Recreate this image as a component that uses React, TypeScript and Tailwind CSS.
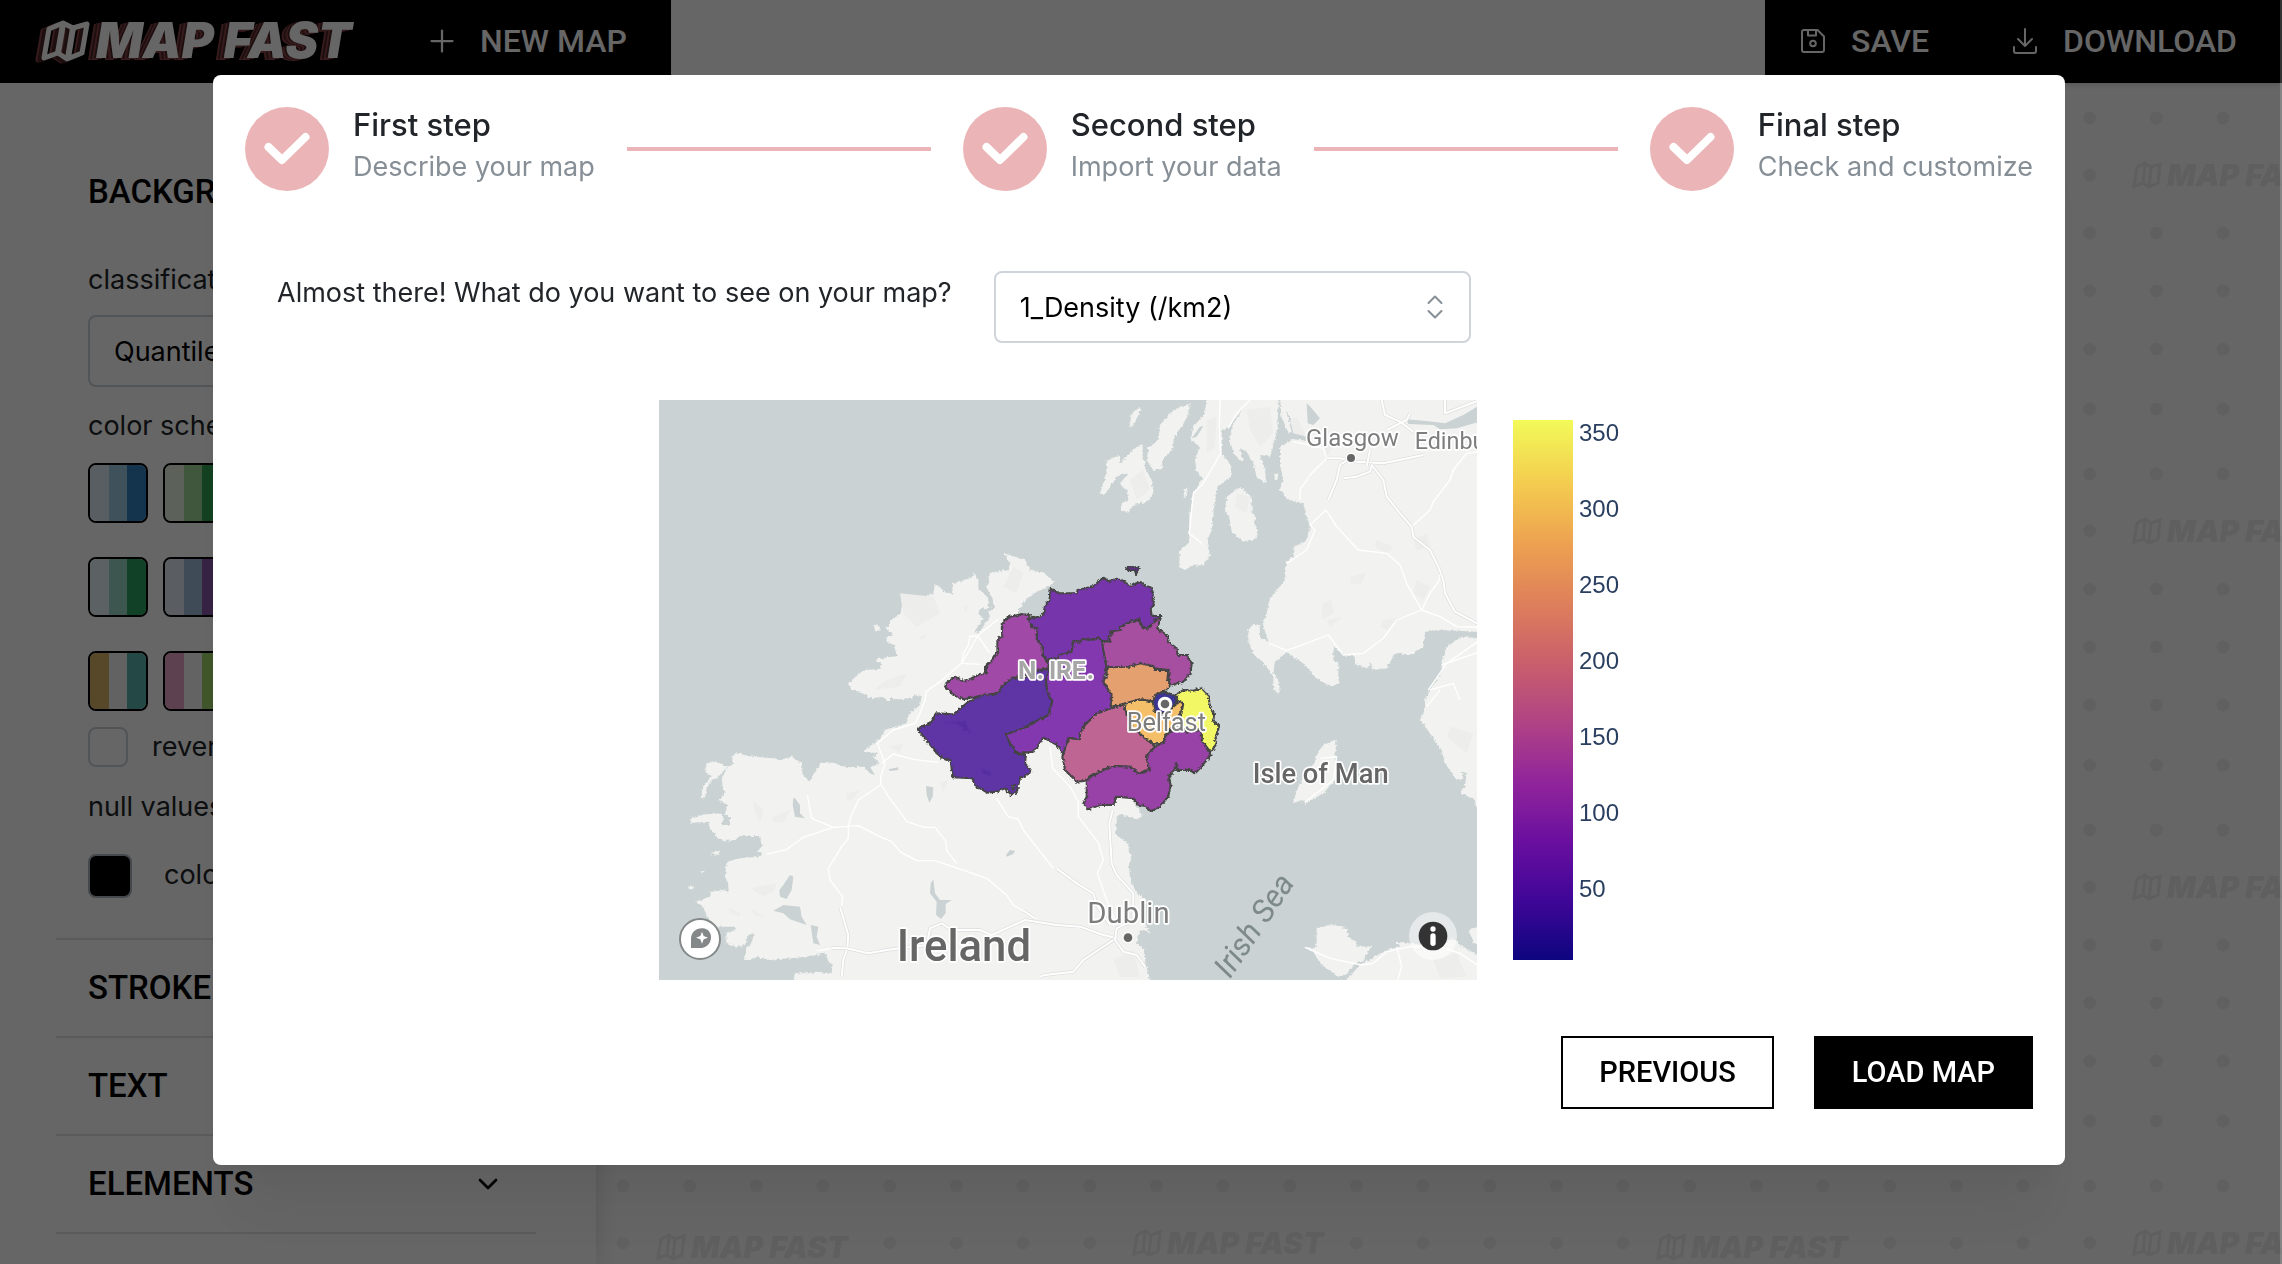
import React, { useState } from 'react';
import { ChevronDown, Plus } from 'lucide-react';

const steps = [
  { title: 'First step', description: 'Describe your map' },
  { title: 'Second step', description: 'Import your data' },
  { title: 'Final step', description: 'Check and customize' },
];

const schemes = [
  ['#deebf7', '#9ecae1', '#3182bd'],
  ['#e5f5e0', '#a1d99b', '#31a354'],
  ['#fee6ce', '#fdae6b', '#e6550d'],
  ['#efedf5', '#bcbddc', '#756bb1'],
  ['#fee0d2', '#fc9272', '#de2d26'],
  ['#e5f5f9', '#99d8c9', '#2ca25f'],
  ['#e0ecf4', '#9ebcda', '#8856a7'],
  ['#e0f3db', '#a8ddb5', '#43a2ca'],
  ['#fee8c8', '#fdbb84', '#e34a33'],
  ['#ece7f2', '#a6bddb', '#2b8cbe'],
  ['#d8b365', '#f5f5f5', '#5ab4ac'],
  ['#e9a3c9', '#f7f7f7', '#a1d76a'],
  ['#af8dc3', '#f7f7f7', '#7fbf7b'],
  ['#ef8a62', '#f7f7f7', '#67a9cf'],
  ['#fc8d59', '#ffffbf', '#91bfdb'],
];

const land = [
  // Ireland
  '1092,520 1155,540 1170,568 1215,582 1242,605 1235,615 1190,635 1150,665 1135,695 1165,720 1240,760 1500,800 1560,1100 1480,1265 1510,1308 1490,1318 1440,1303 1430,1310 1428,1365 1465,1390 1467,1420 1475,1425 1467,1450 1470,1500 1490,1540 1522,1560 1500,1590 1520,1645 1535,1660 1500,1650 1490,1690 1515,1710 1515,1745 1533,1810 460,1810 465,1780 510,1780 530,1775 575,1780 578,1752 565,1750 560,1720 500,1730 390,1740 345,1730 335,1740 312,1740 320,1700 330,1697 345,1660 325,1665 315,1695 290,1700 260,1690 258,1660 290,1645 285,1640 230,1640 200,1610 190,1580 165,1565 210,1550 215,1535 250,1530 265,1535 265,1510 255,1490 260,1445 300,1435 360,1430 368,1420 350,1415 365,1400 360,1368 300,1368 285,1380 250,1383 230,1370 208,1340 205,1325 155,1328 150,1315 180,1305 240,1300 250,1315 245,1335 270,1335 270,1315 255,1300 265,1275 235,1262 245,1250 255,1245 245,1200 262,1160 280,1155 275,1130 290,1117 320,1128 430,1138 455,1130 485,1150 490,1185 508,1205 530,1170 540,1147 580,1148 615,1162 670,1160 700,1187 690,1162 718,1150 700,1130 715,1120 670,1115 720,1075 735,1050 800,1030 805,1005 840,975 845,948 820,945 815,958 800,950 790,960 755,955 745,962 730,950 690,955 660,935 635,930 625,910 670,870 715,868 725,855 705,838 770,828 762,795 740,785 740,772 760,765 738,745 755,720 782,700 790,650 835,660 880,640 885,612 905,625 910,635 940,642 935,612 990,595 1005,580 1015,600 1015,625 1045,655 1045,685 1020,685 1015,700 1030,715 1003,755 1015,760 1050,710 1045,695 1065,680 1055,650 1040,625 1050,578 1105,570 1110,550',
  '183,1255 190,1220 215,1188 195,1175 200,1150 230,1145 262,1160 235,1190 215,1200 200,1225 195,1255',
  '702,735 720,740 718,752 705,750',
  '210,1423 225,1413 240,1415 238,1424',
  '180,1475 194,1472 190,1480',
  '145,1518 162,1520 158,1528 147,1527',
  // Hebrides and Kintyre
  '1440,225 1400,240 1400,280 1380,340 1395,343 1435,285 1465,280 1440,310 1460,330 1465,360 1445,370 1445,390 1465,398 1480,375 1520,365 1540,345 1535,300 1515,265 1515,240 1508,240 1508,195 1485,205 1440,250',
  '1650,68 1600,90 1560,135 1555,180 1525,205 1520,240 1540,270 1565,268 1570,235 1600,205 1600,180 1645,105',
  '1500,80 1475,100 1468,145 1485,125 1500,95',
  '1700,50 1695,100 1660,140 1652,180 1680,200 1665,240 1670,275 1690,295 1660,340 1648,400 1647,490 1620,510 1617,560 1635,570 1655,558 1690,555 1710,525 1700,485 1715,450 1720,400 1730,325 1775,285 1770,250 1745,220 1745,150 1765,145 1800,95 1850,50',
  '1830,50 1775,140 1770,180 1780,220 1810,248 1800,205 1820,215 1840,250 1850,290 1878,310 1875,265 1860,225 1890,230 1912,150 1916,50',
  '1800,320 1760,350 1755,390 1768,410 1775,455 1810,485 1850,475 1852,445 1840,430 1850,410 1835,400 1835,350',
  '1630,350 1632,330 1642,320 1640,350',
  '1903,300 1905,283 1914,280 1912,300',
  // Scotland
  '1920,50 1924,110 1945,158 1955,155 1938,90 1960,130 1990,155 2000,182 1960,178 1920,200 1920,260 1930,290 1920,330 1945,360 1990,370 2000,410 2010,440 2000,480 1965,500 1960,530 1938,550 1935,600 1890,655 1880,700 1868,730 1885,785 1862,775 1858,735 1840,732 1825,750 1825,785 1840,820 1880,860 1900,890 1900,930 1920,943 1915,900 1900,880 1905,845 1940,817 1990,850 2030,895 2075,920 2095,910 2095,850 2080,840 2080,800 2120,830 2140,825 2150,855 2185,865 2190,845 2200,870 2240,865 2265,820 2310,825 2350,800 2355,755 2400,750 2520,755 2520,50',
  // Cumbria
  '2520,775 2465,770 2420,800 2405,840 2405,880 2370,930 2355,960 2355,990 2340,1020 2370,1060 2405,1110 2415,1150 2450,1200 2470,1195 2465,1175 2480,1180 2475,1215 2460,1240 2500,1255 2520,1305',
  // Isle of Man
  '2090,1078 2050,1095 2035,1115 2020,1155 1975,1220 1958,1270 1990,1260 1995,1272 2050,1240 2085,1200 2090,1165 2085,1130',
  // Anglesey and Wales
  '2030,1645 2075,1633 2120,1645 2125,1670 2150,1685 2145,1700 2195,1698 2175,1730 2170,1745 2145,1750 2115,1787 2090,1788 2040,1750 2020,1715 1990,1700 2030,1705',
  '2110,1810 2160,1755 2240,1710 2280,1700 2265,1685 2310,1690 2380,1700 2440,1675 2460,1695 2520,1730 2520,1810',
  '2485,1650 2520,1638 2520,1700 2500,1685',
];

const water = [
  '460,1255 465,1255 480,1275 480,1300 495,1315 465,1310 458,1275',
  '450,1485 460,1490 455,1530 440,1557 420,1550 418,1530 430,1515',
  '400,1592 430,1575 480,1580 485,1610 500,1635 450,1618 430,1600',
  '512,1635 535,1640 530,1670 540,1695 520,1690',
  '858,1218 880,1222 878,1250 868,1268 860,1245',
  '745,1168 775,1162 775,1170 750,1173',
  '670,1155 690,1160 705,1186 690,1180',
  '1098,1425 1110,1410 1125,1412 1120,1422 1100,1430',
  '880,1498 885,1540 900,1560 935,1560 917,1572 917,1600 903,1617 888,1605 890,1565 870,1540 872,1510',
  '2300,118 2380,125 2415,130 2470,105 2520,75 2520,125 2450,145 2400,148 2380,135 2305,132',
  '2000,70 2015,85 2040,115 2020,135 2003,130',
  '1655,175 1680,140 1690,138 1670,170',
];

const relief = [
  '780,640 880,650 900,700 830,740 790,700',
  '835,775 860,758 850,778',
  '970,680 985,672 978,700',
  '740,900 800,880 780,920 700,930',
  '1120,560 1150,580 1130,640 1090,620',
  '340,1260 370,1290 360,1330 345,1300',
  '400,1310 450,1290 430,1330 400,1325',
  '620,1240 660,1230 640,1255 620,1265',
  '330,1525 410,1510 400,1535 370,1550',
  '265,1580 300,1600 300,1610 270,1600',
  '335,1585 375,1615 340,1605',
  '750,1100 790,1090 780,1120',
  '900,1210 925,1200 910,1235',
  '1820,90 1890,80 1900,160 1860,200 1830,150',
  '1700,120 1730,110 1725,200 1700,220',
  '1790,340 1830,350 1820,400 1785,380',
  '1470,300 1510,270 1530,330 1490,360',
  '1970,110 2000,170 1960,160 1950,120',
  '2050,190 2080,200 2060,230',
  '2210,480 2260,500 2240,520 2205,500',
  '2320,480 2360,460 2370,500 2330,510',
  '2130,590 2180,580 2160,615 2135,610',
  '2045,670 2075,660 2080,700 2048,720',
  '2060,720 2110,710 2070,740',
  '2230,720 2290,710 2240,750 2220,740',
  '2330,600 2370,620 2350,660 2320,640',
  '2430,1040 2500,1060 2480,1120 2420,1070',
  '1450,1600 1480,1570 1490,1620 1460,1650',
  '1420,1740 1480,1710 1500,1790 1440,1790',
  '2380,1740 2450,1720 2480,1790 2400,1795',
];

const minorRoads = [
  '1075,718 1015,765 965,850 900,905 858,935 855,960 840,1000 825,1030 760,1050 712,1090 735,1150 722,1190 722,1215 655,1260 632,1310 625,1340 625,1375 605,1400 565,1465 570,1500 608,1550 605,1580',
  '990,768 1015,770 1050,820',
  '990,768 985,795 970,820 965,850 1020,853',
  '725,1150 760,1122 820,1138 895,1147',
  '725,1215 745,1250 790,1310 800,1325 855,1342 885,1342 918,1385 920,1412 950,1450',
  '380,1423 440,1408 490,1372 580,1342 655,1337 720,1370 755,1385 780,1415 830,1442 885,1442 945,1462 1040,1495 1100,1545 1120,1575 1190,1615',
  '502,1245 515,1315 580,1342',
  '1070,1255 1105,1310 1135,1318 1150,1350 1240,1465',
  '530,1712 580,1705',
  '1230,1100 1238,1165 1290,1220 1315,1265 1315,1310 1375,1388 1390,1440 1372,1480 1400,1560 1425,1620',
  '2058,390 2090,440 2155,510 2240,520 2280,555 2300,610 2345,690 2270,720 2230,775 2170,820 2110,825 2065,765 1940,812 1888,790',
  '2058,390 2010,435 2025,450 2000,510 1940,550',
  '2345,690 2400,710 2450,740 2520,742',
  '2345,690 2370,640 2398,600 2400,565',
  '2315,440 2370,390 2380,365 2430,300 2440,270 2480,220 2520,215',
  '2060,235 2010,285 1980,330 1980,360',
  '1740,60 1738,140 1742,220 1690,310 1660,340 1648,460 1685,490',
  '1765,145 1790,100 1830,60',
  '1960,185 2050,205 2060,235',
  '2405,855 2520,815 M2365,930 2420,850 2520,780',
  '2370,930 2440,910 2460,960 M2360,980 2400,930',
  '1995,1702 2070,1735 2165,1755 2200,1750 2240,1715 2310,1700 2400,1700 2460,1720 2520,1760',
  '2270,1700 2285,1760 2270,1810',
  '2040,1135 2090,1130 2080,1200 2000,1262',
];

const mainRoads = [
  '600,1580 625,1665 622,1705 610,1740 605,1790',
  '575,1704 620,1705 685,1720 740,1710 860,1695 870,1645 905,1630 935,1650 1020,1650 1055,1665 1155,1620 1250,1635 1320,1640 1390,1665 1420,1672',
  '1250,1465 1310,1510 1360,1540 1370,1575 1410,1635',
  '1418,1290 1408,1330 1415,1450 1430,1485 1480,1540 1480,1620 1430,1645 1425,1680 1450,1715 1490,1725 1515,1760',
  '1150,1592 1185,1615',
  '1200,1790 1215,1785 1300,1775 1330,1740 1420,1680',
  '2060,235 2100,235 2150,245 2230,250 2350,225',
  '2065,360 2090,300 2100,255 2130,235',
  '2110,295 2150,290 2190,275 2195,255 2230,300 2240,350 2280,400 2315,440 2320,470 2370,510 2395,560 2410,600 2415,640 2445,695 2520,735',
  '2225,60 2235,105 2280,125 2320,155 M2240,150 2300,120 2310,100',
  '2415,60 2415,100 2520,60',
  '2180,260 2190,210',
];

// Outlines share the frame of the coast lines above, shifted by (780, 480)
const districts = [
  { name: 'Causeway Coast and Glens', fill: '#7634ab', points: '452,147 478,160 530,160 532,150 560,145 585,135 598,122 612,113 625,124 650,116 672,124 690,138 722,126 735,138 752,142 762,165 757,180 762,195 752,205 755,228 784,228 760,248 740,267 728,262 718,238 690,246 660,262 660,270 630,275 638,285 626,290 632,305 605,303 595,293 572,300 550,298 540,305 520,303 515,335 480,345 470,355 440,362 428,345 428,320 410,300 412,265 395,262 385,237 415,230 430,225 434,200 448,182' },
  { name: 'Derry City and Strabane', fill: '#a04aa6', points: '385,237 390,225 365,222 350,226 340,228 325,232 310,245 305,262 307,290 292,298 292,335 275,362 258,378 258,400 240,402 205,420 185,422 165,410 138,430 135,440 150,455 160,465 190,478 240,468 290,460 330,420 350,412 400,395 450,385 470,358 440,362 428,345 428,320 410,300 412,265 395,262' },
  { name: 'Fermanagh and Omagh', fill: '#5e34a6', points: '52,567 75,555 95,545 108,520 160,523 205,485 250,465 290,462 318,428 340,412 365,420 400,395 445,385 450,400 438,420 442,455 457,485 445,525 420,540 400,548 370,565 318,583 330,610 350,640 378,645 375,670 392,690 388,700 360,715 355,735 350,755 335,765 315,745 290,755 262,758 240,745 225,735 215,715 158,712 152,662 128,655 110,640 95,620' },
  { name: 'Mid Ulster', fill: '#8337af', points: '440,362 470,355 480,345 515,335 520,303 540,305 550,298 572,300 595,293 605,303 620,375 610,425 635,465 632,505 590,520 555,555 540,598 505,595 490,643 470,615 430,592 410,625 395,635 355,643 330,610 318,583 370,565 400,548 445,525 457,485 442,455 438,420 450,385' },
  { name: 'Mid and East Antrim', fill: '#a64fa1', points: '605,303 632,305 626,290 638,285 630,275 660,270 660,262 690,246 718,238 728,262 740,267 784,228 772,265 800,285 808,308 830,325 832,345 860,345 875,370 872,400 850,425 830,430 810,438 805,390 760,385 720,370 690,380 620,382' },
  { name: 'Antrim and Newtownabbey', fill: '#e5a06f', points: '620,382 690,380 720,370 760,378 765,390 805,390 802,420 810,438 790,455 765,465 760,485 720,478 680,490 632,500 635,465 610,425 620,410' },
  { name: 'Armagh, Banbridge and Craigavon', fill: '#bf6594', points: '505,595 540,598 540,580 555,555 590,520 665,495 680,490 690,550 720,580 765,620 738,650 750,690 730,692 718,702 690,680 640,678 610,690 570,708 555,722 530,725 495,690 487,650' },
  { name: 'Lisburn and Castlereagh', fill: '#f4bf68', points: '670,492 720,478 760,485 765,515 790,530 820,500 845,480 850,500 830,540 800,580 790,608 765,612 740,600 720,580 690,555' },
  { name: 'Ards and North Down', fill: '#f2f765', points: '820,470 850,450 880,452 905,445 925,465 930,500 942,525 940,545 958,555 945,600 950,610 932,637 912,610 905,600 905,570 860,575 840,545 850,490' },
  { name: 'Newry, Mourne and Down', fill: '#9842a7', points: '765,620 790,608 800,580 840,560 860,575 905,570 905,600 932,645 900,685 885,700 870,690 830,690 830,670 820,695 805,708 812,735 805,770 780,800 750,815 735,798 715,795 700,775 650,770 640,795 600,795 565,808 550,790 560,770 560,720 610,690 640,678 690,680 718,702 750,690 738,650' },
  { name: 'Belfast', fill: '#3e3596', points: '780,458 795,455 830,470 828,490 820,500 795,520 765,515 758,485 768,465' },
  { name: 'Rathlin Island', fill: '#5e2f8f', points: '678,85 692,78 716,83 709,105 705,92 678,90' },
];

const ticks = [350, 300, 250, 200, 150, 100, 50];

const MapGlyph: React.FC<{ className?: string }> = ({ className }) => (
  <svg viewBox="0 0 50 42" className={className} fill="none" stroke="currentColor" strokeWidth="5" strokeLinejoin="round" aria-hidden="true">
    <path d="M9 9 L23 3 L33 8 L47 4 L42 33 L27 39 L18 33 L4 38 Z" />
    <path d="M23 4 L18 33 M33 8 L28 38" strokeWidth="6" />
  </svg>
);

const Logo = () => (
  <div className="flex w-[320px] items-center gap-1.5 text-white">
    <span className="relative ml-1 h-[42px] w-[50px] shrink-0">
      <MapGlyph className="absolute -left-1.5 top-0.5 h-[42px] w-[50px] text-[#8a4547]" />
      <MapGlyph className="absolute -left-1 top-0.5 h-[42px] w-[50px] text-[#4a2526]" />
      <MapGlyph className="absolute left-0 top-0 h-[42px] w-[50px]" />
    </span>
    <span className="whitespace-nowrap font-['Inter',sans-serif] text-[49px] font-black italic leading-none [text-shadow:-2px_0_0_#4a2526,-4px_1px_0_#8a4547,-6px_1px_0_#4a2526,-8px_2px_0_#8a4547]">
      MAP FAST
    </span>
  </div>
);

const SaveIcon = () => (
  <svg viewBox="0 0 24 24" className="size-6" fill="none" stroke="currentColor" strokeWidth="2" strokeLinejoin="round" aria-hidden="true">
    <path d="M3 1 H16.500 L23 7.500 V21 Q23 23 21 23 H3 Q1 23 1 21 V3 Q1 1 3 1 Z" />
    <path d="M7 1 V6.500 H15 V1" />
    <circle cx="12" cy="14.500" r="2.800" />
  </svg>
);

const DownloadIcon = () => (
  <svg viewBox="0 0 24 26" className="h-[26px] w-6" fill="none" stroke="currentColor" strokeWidth="2" strokeLinecap="round" strokeLinejoin="round" aria-hidden="true">
    <path d="M12 1 V17 M5 11 L12 18 L19 11" />
    <path d="M1 19 V23 Q1 25 3 25 H21 Q23 25 23 23 V19" />
  </svg>
);

const Header = () => (
  <header className="relative z-10 flex h-[83px] shrink-0 justify-between bg-white font-['Roboto',sans-serif] text-[32px] font-medium text-white shadow-md">
    <div className="flex items-center bg-black pb-0.5 pl-9 pr-11">
      <Logo />
      <button className="ml-[68px] flex items-center gap-5">
        <Plus className="size-9" strokeWidth={1.5} />
        NEW MAP
      </button>
    </div>
    <div className="flex items-center gap-[84px] bg-black pb-0.5 pl-9 pr-[45px]">
      <button className="flex items-center gap-[26px]">
        <SaveIcon />
        SAVE
      </button>
      <button className="flex items-center gap-[26px]">
        <DownloadIcon />
        DOWNLOAD
      </button>
    </div>
  </header>
);

const Sidebar = () => {
  const [reverse, setReverse] = useState(false);

  return (
    <aside className="z-10 w-[596px] shrink-0 bg-white pl-14 pr-[60px] text-[27px] text-[#212529] shadow-[0_0_24px_rgba(0,0,0,0.15)]">
      <div className="border-b-2 border-[#dee2e6] px-8 pb-10">
        <h2 className="flex h-[172px] items-center pt-11 font-['Roboto',sans-serif] text-[33px] font-medium leading-none text-black">
          BACKGROUND
        </h2>
        <label htmlFor="classification" className="block h-[60px] leading-[50px]">classification</label>
        <select id="classification" className="h-[72px] w-full appearance-none rounded-lg border-2 border-[#ced4da] bg-white px-6 pt-0.5 text-black">
          <option>Quantile</option>
        </select>
        <p className="mt-4 h-[60px] leading-[46px]">color scheme</p>
        <div className="flex h-[248px] flex-wrap content-start gap-x-[15px] gap-y-[34px]">
          {schemes.map((colors) => (
            <button key={colors.join()} aria-label="color scheme" className="flex size-[60px] overflow-hidden rounded-lg border-2 border-black">
              {colors.map((color) => (
                <span key={color} className="h-full flex-1" style={{ backgroundColor: color }} />
              ))}
            </button>
          ))}
        </div>
        <label className="mt-4 flex items-center gap-6">
          <input
            type="checkbox"
            checked={reverse}
            onChange={() => setReverse(!reverse)}
            className="size-10 appearance-none rounded-lg border-2 border-[#ced4da] checked:bg-black"
          />
          reverse
        </label>
        <p className="mt-4 leading-[46px]">null values</p>
        <div className="mt-6 flex h-11 items-center gap-8">
          <button id="null-color" aria-label="null values color" className="size-11 rounded-lg border-2 border-[#adb5bd] bg-black" />
          <label htmlFor="null-color">color</label>
        </div>
      </div>
      {['STROKE', 'TEXT', 'ELEMENTS'].map((section) => (
        <button
          key={section}
          className="flex h-[98px] w-full items-center justify-between border-b-2 border-[#dee2e6] px-8 font-['Roboto',sans-serif] text-[33px] font-medium text-black"
        >
          {section}
          <ChevronDown className="size-8" strokeWidth={2} />
        </button>
      ))}
    </aside>
  );
};

const Watermark: React.FC<{ x: number; y: number }> = ({ x, y }) => (
  <g transform={`translate(${x} ${y})`}>
    <path d="M4 4 L12 0 L18 4 L27 1 L25 20 L16 24 L10 20 L1 23 Z M12 1 L10 20 M18 4 L16 23" fill="none" stroke="#ededed" strokeWidth="3" />
    <text x="34" y="23" fill="#ededed" className="font-['Inter',sans-serif] text-[30px] font-black italic">MAP FAST</text>
  </g>
);

const dotRows = [35, 92, 150, 208, 266, 326];
const dotColumns = Array.from({ length: 15 }, (_, i) => 27 + i * 66.67);

const Canvas = () => (
  <main className="min-w-0 flex-1">
    <svg className="size-full bg-white" aria-hidden="true">
      <defs>
        <pattern id="dots" width="1000" height="356" patternUnits="userSpaceOnUse">
          {dotRows.map((y) =>
            dotColumns
              .filter((x) => y !== 92 || !((x > 60 && x < 260) || (x > 530 && x < 740)))
              .map((x) => <circle key={`${x}-${y}`} cx={x} cy={y} r="6.500" fill="#f1f1f1" />)
          )}
          <Watermark x={61} y={84} />
          <Watermark x={537} y={80} />
        </pattern>
      </defs>
      <rect width="100%" height="100%" fill="url(#dots)" />
    </svg>
  </main>
);

const Stepper = () => (
  <ol className="flex items-center">
    {steps.map((step, i) => (
      <React.Fragment key={step.title}>
        {i > 0 && <li aria-hidden="true" className="mx-8 h-1 flex-1 bg-[#ebb4b6]" />}
        <li className="flex items-center gap-6">
          <span className="flex size-[84px] items-center justify-center rounded-full bg-[#ebb4b6]">
            <svg viewBox="0 0 46 34" className="h-[34px] w-[46px]" fill="none" stroke="#fff" strokeWidth="8" strokeLinecap="round" strokeLinejoin="round" aria-hidden="true">
              <path d="M4.500 15 L18 28 L41.500 5" />
            </svg>
          </span>
          <span className="flex flex-col whitespace-nowrap">
            <span className="text-[31px] font-medium leading-9 text-[#212529]">{step.title}</span>
            <span className="text-[27px] leading-[48px] text-[#868e96]">{step.description}</span>
          </span>
        </li>
      </React.Fragment>
    ))}
  </ol>
);

const MapView = () => (
  <svg viewBox="57 60 2454 1740" className="h-[580px] w-[818px] bg-[#cad2d3]" role="img" aria-label="Population density in Northern Ireland">
    <defs>
      <filter id="coast" x="0" y="0" width="1" height="1">
        <feTurbulence type="fractalNoise" baseFrequency="0.12" numOctaves="2" seed="4" />
        <feDisplacementMap in="SourceGraphic" scale="12" xChannelSelector="R" yChannelSelector="G" />
      </filter>
    </defs>
    <g fill="#f2f3f1" filter="url(#coast)">
      {land.map((points) => <polygon key={points} points={points} />)}
    </g>
    <g fill="#ededec">
      {relief.map((points) => <polygon key={points} points={points} />)}
    </g>
    <g fill="#cad2d3">
      {water.map((points) => <polygon key={points} points={points} />)}
    </g>
    <g fill="none" stroke="#fff" strokeWidth="4" strokeLinejoin="round">
      {minorRoads.map((points) => <path key={points} d={`M${points}`} />)}
    </g>
    <g fill="none" strokeLinejoin="round">
      {mainRoads.map((points) => (
        <React.Fragment key={points}>
          <path d={`M${points}`} stroke="#dcdddd" strokeWidth="10" />
          <path d={`M${points}`} stroke="#fff" strokeWidth="6" />
        </React.Fragment>
      ))}
    </g>
    <g transform="translate(780 480)" stroke="#444" strokeWidth="6" strokeLinejoin="round" filter="url(#coast)">
      {districts.map((d) => (
        <polygon key={d.name} points={d.points} fill={d.fill}>
          <title>{d.name}</title>
        </polygon>
      ))}
      <path d="M335,738 l10,-4 l-4,14 z" fill="#f2f3f1" />
      <path d="M125,548 l70,-5 l16,34 l-24,-10 l-14,-14 z M245,685 l30,16 l-6,8 l-22,-10 z" fill="#572fa0" stroke="none" />
    </g>
    <circle cx="1575" cy="972" r="22" fill="#fff" />
    <circle cx="1575" cy="972" r="13" fill="#666" />
    <circle cx="2133" cy="234" r="16" fill="#fff" />
    <circle cx="2133" cy="234" r="12" fill="#666" />
    <circle cx="1464" cy="1673" r="17" fill="#fff" />
    <circle cx="1464" cy="1673" r="13" fill="#666" />
    <g className="font-['Roboto',sans-serif]" fill="#7d7d7d" stroke="#fff" strokeWidth="10" strokeLinejoin="round" paintOrder="stroke">
      <text x="1134" y="897" fontSize="72" fontWeight="700" fill="#a6a6a6" className="font-['Inter',sans-serif]">N. IRE.</text>
      <text x="1460" y="1052" fontSize="76">Belfast</text>
      <text x="1998" y="197" fontSize="72">Glasgow</text>
      <text x="2324" y="206" fontSize="70">Edinburgh</text>
      <text x="1342" y="1630" fontSize="88">Dublin</text>
      <text x="1838" y="1210" fontSize="82" fontWeight="500" fill="#666">Isle of Man</text>
      <text x="770" y="1742" fontSize="131" fontWeight="500" fill="#666">Ireland</text>
    </g>
    <text x="1966" y="1508" transform="rotate(-56 1966 1508)" textAnchor="end" fontSize="94" fontStyle="italic" fill="#7d898b" className="font-['Roboto',sans-serif]">Irish Sea</text>
    <g transform="translate(180 1677)">
      <circle r="60" fill="#fff" stroke="#858888" strokeWidth="6" />
      <path d="M-27 27 V0 C-27 -20 -12 -33 8 -32 C24 -31 34 -18 33 -4 C32 14 18 27 0 27 Z" fill="#858888" />
      <path d="M6 -22 L11 -9 L24 -4 L11 1 L6 14 L1 1 L-12 -4 L1 -9 Z" fill="#fff" />
    </g>
    <g transform="translate(2379 1668)">
      <circle r="72" fill="#fff" fillOpacity="0.500" />
      <circle r="43" fill="#333" />
      <circle cy="-21" r="8" fill="#fff" />
      <rect x="-8" y="-8" width="16" height="38" rx="8" fill="#fff" />
    </g>
  </svg>
);

const ColorBar = () => (
  <div className="flex gap-1.5">
    <div className="h-[540px] w-[60px] bg-[linear-gradient(to_top,#0d057f,#3f0697_11%,#6a0f9f_22%,#91259b_33%,#b04384_44%,#c95f6c_55%,#de7f5b_66%,#eda150_77%,#f4cb4f_88%,#f2fa58)]" />
    <ul className="flex flex-col font-['Liberation_Sans',Arial,sans-serif] text-2xl text-[#2a3f5f]">
      {ticks.map((tick) => (
        <li key={tick} className="h-[76px] leading-[26px]">{tick}</li>
      ))}
    </ul>
  </div>
);

const ImportModal = () => {
  const [column, setColumn] = useState('1_Density (/km2)');

  return (
    <div className="fixed inset-0 z-20 flex items-start justify-center border-r-2 border-white/20 bg-black/60 pr-0.5 pt-[75px]">
      <section
        role="dialog"
        aria-label="Import data"
        className="mx-[213px] flex-1 rounded-lg bg-white px-8 pb-14 pt-8 shadow-[0_2px_6px_rgba(0,0,0,0.05),0_72px_56px_-14px_rgba(0,0,0,0.05),0_34px_24px_-14px_rgba(0,0,0,0.04)]"
      >
        <Stepper />
        <div className="mt-20 flex items-start gap-[42px] px-8 text-[27px] text-[#212529]">
          <label htmlFor="column" className="leading-[43px]">Almost there! What do you want to see on your map?</label>
          <div className="relative w-[477px]">
            <select
              id="column"
              value={column}
              onChange={(e) => setColumn(e.target.value)}
              className="h-[72px] w-full appearance-none rounded-lg border-2 border-[#ced4da] bg-white px-6 pt-0.5 text-black"
            >
              <option>1_Density (/km2)</option>
            </select>
            <svg viewBox="0 0 16 24" className="pointer-events-none absolute right-7 top-6 h-6 w-4" fill="none" stroke="#868e96" strokeWidth="2" strokeLinecap="round" strokeLinejoin="round" aria-hidden="true">
              <path d="M1.500 8 L8 1.500 L14.500 8 M1.500 16 L8 22.500 L14.500 16" />
            </svg>
          </div>
        </div>
        <div className="mt-[57px] flex justify-center gap-9">
          <MapView />
          <div className="mt-5">
            <ColorBar />
          </div>
        </div>
        <div className="mt-14 flex justify-end gap-10 font-['Roboto',sans-serif] text-[29px] font-medium">
          <button className="h-[73px] border-2 border-black bg-white px-9 text-black">PREVIOUS</button>
          <button className="h-[73px] border-2 border-black bg-black px-9 text-white">LOAD MAP</button>
        </div>
      </section>
    </div>
  );
};

const App = () => (
  <div className="flex h-screen flex-col overflow-hidden bg-white font-['Inter',sans-serif]">
    <Header />
    <div className="flex min-h-0 flex-1">
      <Sidebar />
      <Canvas />
    </div>
    <ImportModal />
  </div>
);

export default App;
